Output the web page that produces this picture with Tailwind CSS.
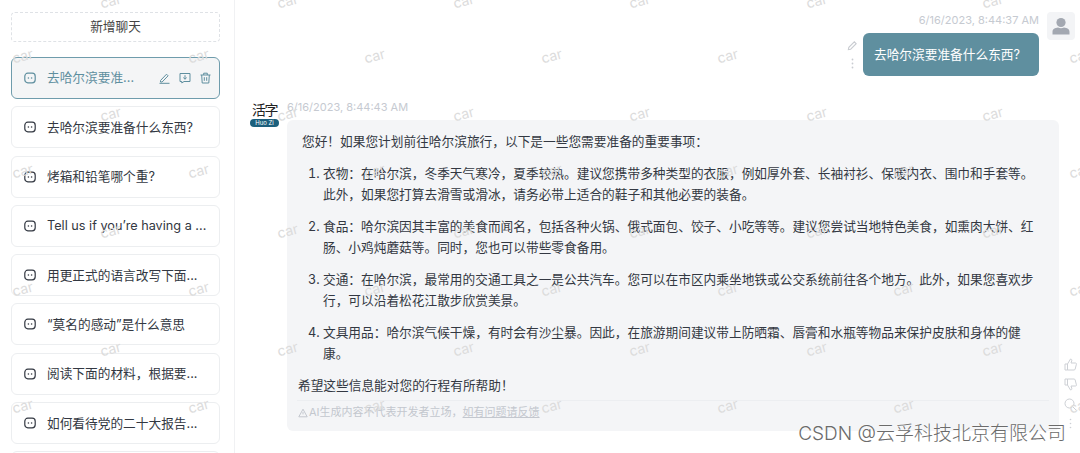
<!DOCTYPE html>
<html lang="zh-CN">
<head>
  <meta charset="UTF-8" />
  <title>新增聊天</title>
  <script src="https://cdn.jsdelivr.net/npm/@tailwindcss/browser@4"></script>
</head>
<body class="bg-white text-[#333842] font-['Inter','Noto_Sans_CJK_SC',sans-serif] text-[12.7px]">
  <div class="relative flex h-[453px] w-[1080px] overflow-hidden">

    <!-- sidebar -->
    <aside class="w-[235px] shrink-0 border-r border-[#f0f1f3] pl-[11px] pr-[14px] pt-3">
      <button class="h-[30px] w-full rounded border border-dashed border-[#dfe2e6] text-[12.7px] text-[#444]">新增聊天</button>
      <div class="mt-[15px] flex flex-col gap-[7.3px]">
        <div class="flex h-[42px] items-center rounded-md border border-[#6f9cac] bg-[#f4f5f6] pl-[12px] pr-[8px] text-[#5f8f9f]">
          <svg class="h-3 w-3 shrink-0" viewBox="0 0 12 12" fill="none" stroke="currentColor" stroke-width="1.2"><rect x=".8" y="1.2" width="10.4" height="9.6" rx="3"/><circle cx="4.4" cy="6" r=".8" fill="currentColor" stroke="none"/><circle cx="7.6" cy="6" r=".8" fill="currentColor" stroke="none"/></svg>
          <span class="ml-[11px] flex-1 truncate">去哈尔滨要准...</span>
          <div class="flex items-center gap-[9px]">
            <svg class="h-[12px] w-[11px]" viewBox="0 0 11 12" fill="none" stroke="currentColor" stroke-width="1"><path d="M1.5 8.5 7.5 2.2l1.6 1.6L3.1 10H1.5zM.5 11.3h10"/></svg>
            <svg class="h-[12px] w-[12px]" viewBox="0 0 12 12" fill="none" stroke="currentColor" stroke-width="1"><path d="M1 1.5h10v8H5L2.8 11V9.5H1zM6 3.2v4M4.3 5.6 6 7.2l1.7-1.6"/></svg>
            <svg class="h-[12px] w-[11px]" viewBox="0 0 11 12" fill="none" stroke="currentColor" stroke-width="1"><path d="M.5 3h10M3.7 3V1.2h3.6V3M1.7 3l.5 8h6.6l.5-8M4.3 5.2v3.6M6.7 5.2v3.6"/></svg>
          </div>
        </div>
        <div class="flex h-[42px] items-center rounded-md border border-[#eceef0] pl-[12px]">
          <svg class="h-3 w-3 shrink-0" viewBox="0 0 12 12" fill="none" stroke="currentColor" stroke-width="1.2"><rect x=".8" y="1.2" width="10.4" height="9.6" rx="3"/><circle cx="4.4" cy="6" r=".8" fill="currentColor" stroke="none"/><circle cx="7.6" cy="6" r=".8" fill="currentColor" stroke="none"/></svg>
          <span class="ml-[11px] truncate">去哈尔滨要准备什么东西?</span>
        </div>
        <div class="flex h-[42px] items-center rounded-md border border-[#eceef0] pl-[12px]">
          <svg class="h-3 w-3 shrink-0" viewBox="0 0 12 12" fill="none" stroke="currentColor" stroke-width="1.2"><rect x=".8" y="1.2" width="10.4" height="9.6" rx="3"/><circle cx="4.4" cy="6" r=".8" fill="currentColor" stroke="none"/><circle cx="7.6" cy="6" r=".8" fill="currentColor" stroke="none"/></svg>
          <span class="ml-[11px] truncate">烤箱和铅笔哪个重?</span>
        </div>
        <div class="flex h-[42px] items-center rounded-md border border-[#eceef0] pl-[12px]">
          <svg class="h-3 w-3 shrink-0" viewBox="0 0 12 12" fill="none" stroke="currentColor" stroke-width="1.2"><rect x=".8" y="1.2" width="10.4" height="9.6" rx="3"/><circle cx="4.4" cy="6" r=".8" fill="currentColor" stroke="none"/><circle cx="7.6" cy="6" r=".8" fill="currentColor" stroke="none"/></svg>
          <span class="ml-[11px] truncate">Tell us if you’re having a ...</span>
        </div>
        <div class="flex h-[42px] items-center rounded-md border border-[#eceef0] pl-[12px]">
          <svg class="h-3 w-3 shrink-0" viewBox="0 0 12 12" fill="none" stroke="currentColor" stroke-width="1.2"><rect x=".8" y="1.2" width="10.4" height="9.6" rx="3"/><circle cx="4.4" cy="6" r=".8" fill="currentColor" stroke="none"/><circle cx="7.6" cy="6" r=".8" fill="currentColor" stroke="none"/></svg>
          <span class="ml-[11px] truncate">用更正式的语言改写下面...</span>
        </div>
        <div class="flex h-[42px] items-center rounded-md border border-[#eceef0] pl-[12px]">
          <svg class="h-3 w-3 shrink-0" viewBox="0 0 12 12" fill="none" stroke="currentColor" stroke-width="1.2"><rect x=".8" y="1.2" width="10.4" height="9.6" rx="3"/><circle cx="4.4" cy="6" r=".8" fill="currentColor" stroke="none"/><circle cx="7.6" cy="6" r=".8" fill="currentColor" stroke="none"/></svg>
          <span class="ml-[11px] truncate">“莫名的感动”是什么意思</span>
        </div>
        <div class="flex h-[42px] items-center rounded-md border border-[#eceef0] pl-[12px]">
          <svg class="h-3 w-3 shrink-0" viewBox="0 0 12 12" fill="none" stroke="currentColor" stroke-width="1.2"><rect x=".8" y="1.2" width="10.4" height="9.6" rx="3"/><circle cx="4.4" cy="6" r=".8" fill="currentColor" stroke="none"/><circle cx="7.6" cy="6" r=".8" fill="currentColor" stroke="none"/></svg>
          <span class="ml-[11px] truncate">阅读下面的材料&#xFF0C;根据要...</span>
        </div>
        <div class="flex h-[42px] items-center rounded-md border border-[#eceef0] pl-[12px]">
          <svg class="h-3 w-3 shrink-0" viewBox="0 0 12 12" fill="none" stroke="currentColor" stroke-width="1.2"><rect x=".8" y="1.2" width="10.4" height="9.6" rx="3"/><circle cx="4.4" cy="6" r=".8" fill="currentColor" stroke="none"/><circle cx="7.6" cy="6" r=".8" fill="currentColor" stroke="none"/></svg>
          <span class="ml-[11px] truncate">如何看待党的二十大报告...</span>
        </div>
        <div class="h-[42px] shrink-0 rounded-md border border-[#eceef0]"></div>
      </div>
    </aside>

    <!-- chat -->
    <main class="flex-1 pl-[15px] pt-3">
      <!-- user message -->
      <div class="flex h-[88px] justify-end pr-[5px]">
        <div class="flex flex-col items-end pt-[1px]">
          <div class="text-[11px] leading-[14px] text-[#c6cad1]">6/16/2023, 8:44:37 AM</div>
          <div class="mt-[6px] flex items-center gap-[5px]">
            <div class="flex flex-col items-center gap-[7px] text-[#c9ccd1]">
              <svg class="h-[11px] w-[11px]" viewBox="0 0 12 12" fill="none" stroke="currentColor" stroke-width="1.2"><path d="M1.5 10.5 2 8l6-6 2 2-6 6z"/></svg>
              <svg class="h-[11px] w-[3px]" viewBox="0 0 3 11" fill="currentColor"><circle cx="1.5" cy="1.5" r=".9"/><circle cx="1.5" cy="5.5" r=".9"/><circle cx="1.5" cy="9.5" r=".9"/></svg>
            </div>
            <div class="relative z-10 flex h-[43px] w-[176px] items-center rounded-md bg-[#5f8f9f] pl-[11px] text-white">去哈尔滨要准备什么东西?</div>
          </div>
        </div>
        <div class="ml-[8px] flex h-[28px] w-[28px] items-center justify-center rounded bg-[#f3f4f6]">
          <svg class="h-[20px] w-[20px] text-[#a3a8b1]" viewBox="0 0 20 20" fill="currentColor"><circle cx="10" cy="6.5" r="4.6"/><path d="M1.5 18.5v-2.6C1.5 13 4 12 7 11.6c2 1 4 1 6 0 3 .4 5.5 1.4 5.5 4.3v2.6z"/></svg>
        </div>
      </div>

      <!-- assistant message -->
      <div class="flex">
        <div class="flex h-[27px] w-[29px] shrink-0 flex-col items-center">
          <div class="text-[14px] leading-[19px] tracking-[-1.5px] text-[#222]">活字</div>
          <div class="flex h-[8px] w-[29px] items-center justify-center rounded-full bg-[#1c5f7c] text-[6px] leading-none text-white">Huo Zi</div>
        </div>
        <div class="ml-[8px] w-[772px]">
          <div class="text-[11px] leading-[14px] text-[#c6cad1]">6/16/2023, 8:44:43 AM</div>
          <div class="mt-[6px] h-[311px] rounded-md bg-[#f4f5f7] pt-[11px] leading-[21px]">
            <p class="pl-[15px]">您好&#xFF01;如果您计划前往哈尔滨旅行&#xFF0C;以下是一些您需要准备的重要事项&#xFF1A;</p>
            <ol class="mt-[11px] list-decimal pl-[36px] pr-[10px]">
              <li class="mb-[11px]">衣物&#xFF1A;在哈尔滨&#xFF0C;冬季天气寒冷&#xFF0C;夏季较热。建议您携带多种类型的衣服&#xFF0C;例如厚外套、长袖衬衫、保暖内衣、围巾和手套等。<br>此外&#xFF0C;如果您打算去滑雪或滑冰&#xFF0C;请务必带上适合的鞋子和其他必要的装备。</li>
              <li class="mb-[11px]">食品&#xFF1A;哈尔滨因其丰富的美食而闻名&#xFF0C;包括各种火锅、俄式面包、饺子、小吃等等。建议您尝试当地特色美食&#xFF0C;如熏肉大饼、红<br>肠、小鸡炖蘑菇等。同时&#xFF0C;您也可以带些零食备用。</li>
              <li class="mb-[11px]">交通&#xFF1A;在哈尔滨&#xFF0C;最常用的交通工具之一是公共汽车。您可以在市区内乘坐地铁或公交系统前往各个地方。此外&#xFF0C;如果您喜欢步<br>行&#xFF0C;可以沿着松花江散步欣赏美景。</li>
              <li>文具用品&#xFF1A;哈尔滨气候干燥&#xFF0C;有时会有沙尘暴。因此&#xFF0C;在旅游期间建议带上防晒霜、唇膏和水瓶等物品来保护皮肤和身体的健<br>康。</li>
            </ol>
            <p class="mt-[11px] pl-[11px]">希望这些信息能对您的行程有所帮助&#xFF01;</p>
            <div class="mx-[10px] mt-[4px] flex items-center border-t border-[#eceef1] pl-[1px] pt-[1px] text-[11px] text-[#c3c7ce]">
              <svg class="mr-[1px] h-[10px] w-[10px]" viewBox="0 0 10 10" fill="none" stroke="currentColor"><path d="M5 1.2 9.2 8.8H.8zM5 4v2.4"/></svg>
              <span>AI生成内容不代表开发者立场&#xFF0C;</span><span class="underline">如有问题请反馈</span>
            </div>
          </div>
        </div>
        <div class="ml-[5px] flex flex-col items-center gap-[7px] self-end pb-[2px] text-[#cdd0d5]">
          <svg class="h-[13px] w-[13px]" viewBox="0 0 13 13" fill="none" stroke="currentColor"><path d="M1 6h2.5v6H1zM3.5 6 6.5 1c1.2 0 1.5 1 1.2 2L7 5h4.5c.8 0 1 .6.9 1.2L11.2 11c-.2.7-.6 1-1.2 1H3.5"/></svg>
          <svg class="h-[13px] w-[13px]" viewBox="0 0 13 13" fill="none" stroke="currentColor"><path d="M1 1h2.5v6H1zM3.5 7l3 5c1.2 0 1.5-1 1.2-2L7 8h4.5c.8 0 1-.6.9-1.2L11.2 2c-.2-.7-.6-1-1.2-1H3.5"/></svg>
          <svg class="h-[13px] w-[13px]" viewBox="0 0 13 13" fill="none" stroke="currentColor"><circle cx="5.5" cy="5.5" r="4.5"/><path d="m9 9 3 3"/></svg>
          <svg class="h-[11px] w-[3px]" viewBox="0 0 3 11" fill="currentColor"><circle cx="1.5" cy="1.5" r=".8"/><circle cx="1.5" cy="5.5" r=".8"/><circle cx="1.5" cy="9.5" r=".8"/></svg>
        </div>
      </div>
    </main>

    <!-- "car" watermark layer -->
    <div id="marks" class="pointer-events-none absolute inset-0"></div>

    <div class="absolute bottom-[7px] right-[14px] text-[19px] font-light leading-[24px] text-[#6b6b6b] [text-shadow:0_0_2px_white]">CSDN @云孚科技北京有限公司</div>
  </div>

  <script>
    // watermark lattice, read off the screenshot
    const marks = document.getElementById('marks');
    const rows = [2, 57, 115, 172, 232, 290, 350, 407];
    const oddX = [22, 198, 374, 551, 727, 903, 1079];
    const evenX = [110, 287, 463, 639, 816, 992];
    rows.forEach((y, i) => {
      (i % 2 ? oddX : evenX).forEach((x) => {
        const el = document.createElement('span');
        el.textContent = 'car';
        el.className = 'absolute -rotate-[15deg] text-[14px] leading-none text-[#dcdcdc]';
        el.style.left = (x - 10) + 'px';
        el.style.top = (y - 8) + 'px';
        marks.appendChild(el);
      });
    });
  </script>
</body>
</html>
